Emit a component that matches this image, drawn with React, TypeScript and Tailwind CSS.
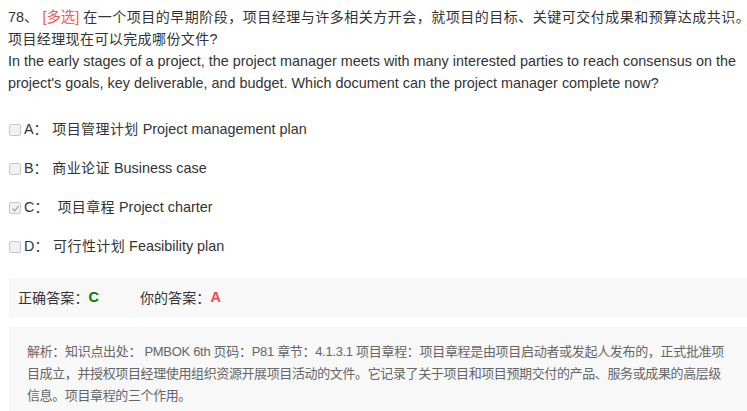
import React, { useLayoutEffect, useRef, useState } from "react";

const font = { fontFamily: '"Liberation Sans", "Noto Sans CJK SC", sans-serif' };

function FitLine({ text, target }: { text: string; target: number }) {
  const ref = useRef<HTMLSpanElement>(null);
  const [ls, setLs] = useState(0);
  useLayoutEffect(() => {
    const el = ref.current;
    if (!el) return;
    el.style.letterSpacing = "0px";
    const w = el.getBoundingClientRect().width;
    const n = Array.from(text).length;
    setLs((target - w) / n);
  }, [text, target]);
  return (
    <div className="whitespace-nowrap">
      <span ref={ref} style={{ letterSpacing: `${ls}px` }}>
        {text}
      </span>
    </div>
  );
}

function Box({ checked }: { checked?: boolean }) {
  return (
    <span className="inline-flex w-[12px] h-[12px] rounded-[2px] border border-[#c8c8c8] bg-[#f1f1f1] items-center justify-center mr-[3px] shrink-0">
      {checked && (
        <svg width="9" height="9" viewBox="0 0 10 10">
          <path d="M1.5 5.2 L4 7.6 L8.6 2.2" fill="none" stroke="#b5b5b5" strokeWidth="1.8" />
        </svg>
      )}
    </span>
  );
}

export default function App() {
  const opts = [
    { k: "A", z: " 项目管理计划", t: " Project management plan" },
    { k: "B", z: " 商业论证", t: " Business case" },
    { k: "C", z: "  项目章程", t: " Project charter", c: true },
    { k: "D", z: " 可行性计划", t: " Feasibility plan" },
  ];
  return (
    <div className="w-[747px] h-[411px] bg-white overflow-hidden text-[#333] text-[14.4px]" style={font}>
      <div className="pl-[8px] pt-[6px] leading-[22px]">
        <div className="whitespace-nowrap">
          78、 <span className="text-[#ef5b5b]">[多选]</span>{" "}
          <span className="text-[14px] tracking-[0.5px]">在一个项目的早期阶段，项目经理与许多相关方开会，就项目的目标、关键可交付成果和预算达成共识</span>
          <span className="text-[14px] tracking-[-8px]">。</span>
        </div>
        <div className="whitespace-nowrap">
          <span className="text-[14px] tracking-[0.4px]">项目经理现在可以完成哪份文件</span>?
        </div>
        <div className="whitespace-nowrap">In the early stages of a project, the project manager meets with many interested parties to reach consensus on the</div>
        <div className="whitespace-nowrap">project's goals, key deliverable, and budget. Which document can the project manager complete now?</div>
      </div>
      <div className="pl-[9px] pt-[25px] flex flex-col gap-[17px]">
        {opts.map((o) => (
          <div key={o.k} className="flex items-center h-[22px] whitespace-pre">
            <Box checked={o.c} />
            <span>
              {o.k}
              <span className="text-[14px] tracking-[0.4px]">：{o.z}</span>
              {o.t}
            </span>
          </div>
        ))}
      </div>
      <div className="ml-[9px] mt-[20px] h-[40px] bg-[#f8f8f8] flex items-center pl-[9px]">
        <span className="text-[14px] tracking-[0.1px]">正确答案：</span>
        <span className="font-bold text-[#008000]">C</span>
        <span className="ml-[41px] text-[14px] tracking-[0.1px]">你的答案：</span>
        <span className="font-bold text-[#f04848]">A</span>
      </div>
      <div className="ml-[9px] mt-[9px] bg-[#f8f8f8] pl-[18px] pr-[4px] pt-[14px] pb-[10px] text-[13px] leading-[22px] text-[#666]">
        <FitLine
          target={697}
          text="解析：知识点出处： PMBOK 6th 页码：P81 章节：4.1.3.1 项目章程：项目章程是由项目启动者或发起人发布的，正式批准项"
        />
        <FitLine
          target={694}
          text="目成立，并授权项目经理使用组织资源开展项目活动的文件。它记录了关于项目和项目预期交付的产品、服务或成果的高层级"
        />
        <FitLine target={164} text="信息。项目章程的三个作用。" />
      </div>
    </div>
  );
}
